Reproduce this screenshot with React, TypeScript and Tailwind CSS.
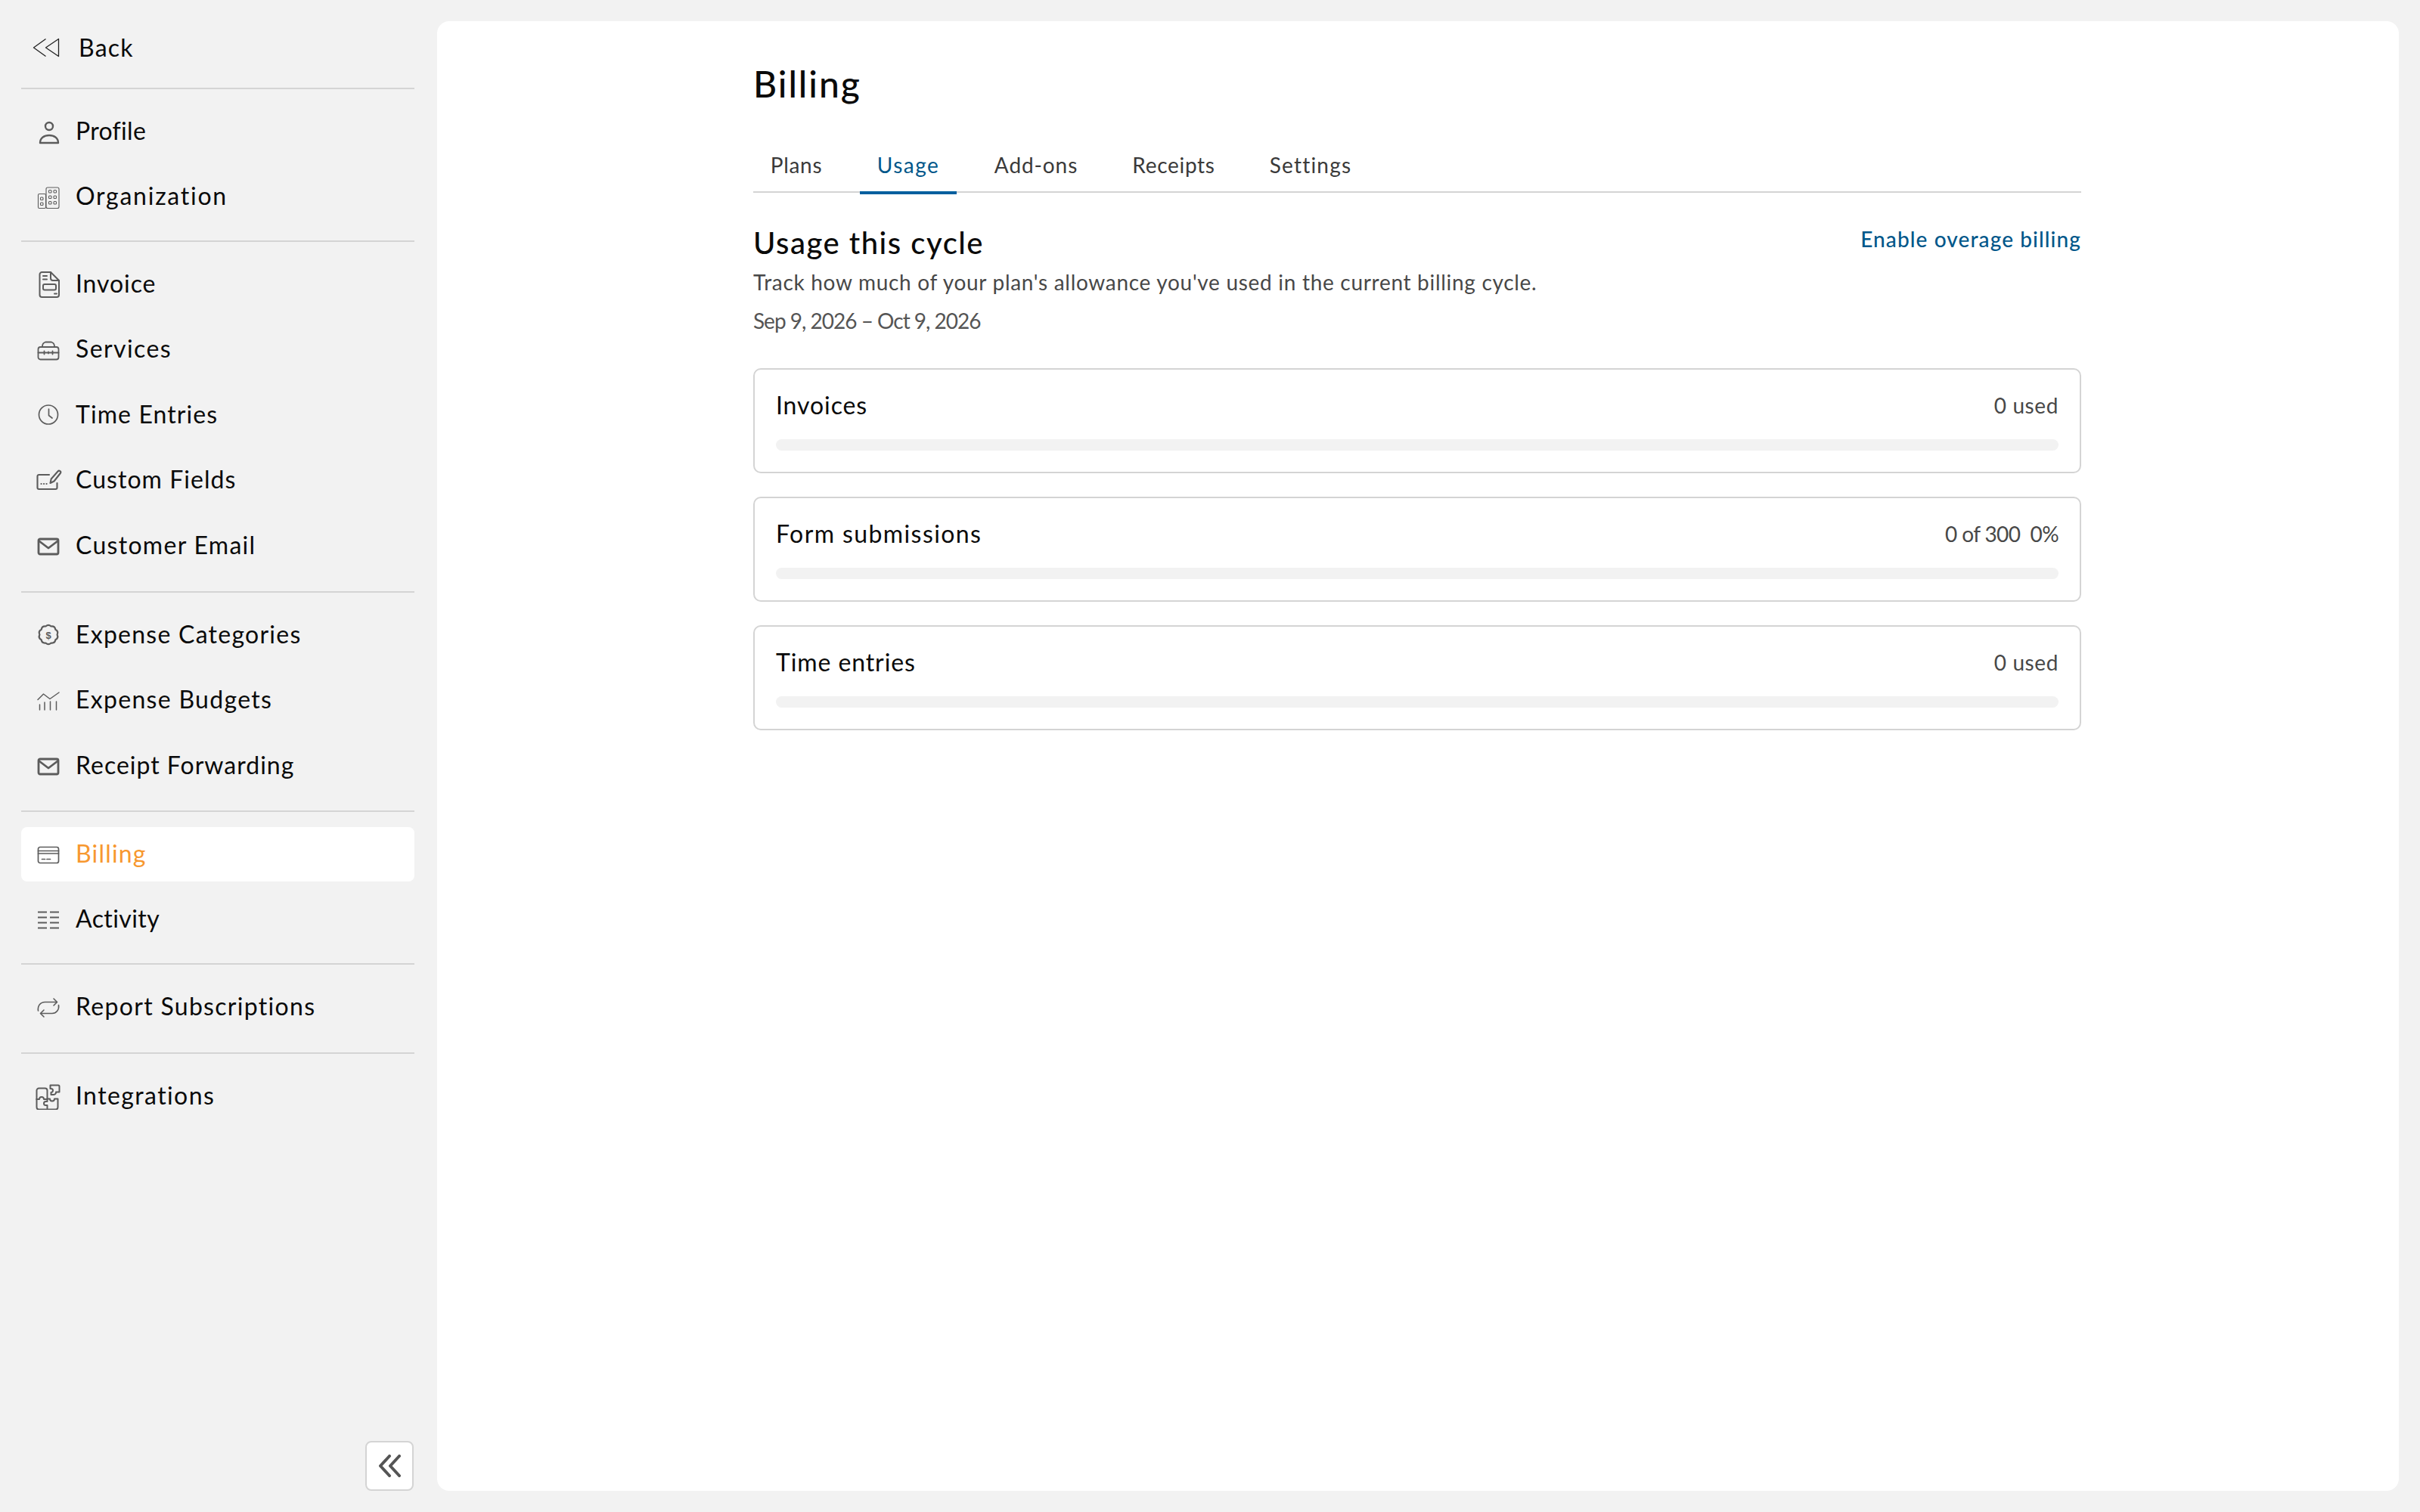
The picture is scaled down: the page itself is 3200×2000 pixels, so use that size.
import React from "react";

const stroke = "#5c5c5c";

function Svg({ children, sw = 2 }: { children: React.ReactNode; sw?: number }) {
  return (
    <svg viewBox="0 0 36 36" className="w-[36px] h-[36px] shrink-0" fill="none" stroke={stroke} strokeWidth={sw} strokeLinecap="round" strokeLinejoin="round">
      {children}
    </svg>
  );
}

const MailIcon = () => (
  <Svg sw={2.8}>
    <rect x="5" y="9" width="26" height="20" rx="2" />
    <path d="M5.500 11.500 18 21l12.500-9.500" />
  </Svg>
);

function scallop() {
  const n = 10;
  const cx = 18, cy = 17.5;
  let d = "";
  for (let i = 0; i < n; i++) {
    const a0 = (i / n) * Math.PI * 2;
    const a1 = ((i + 1) / n) * Math.PI * 2;
    const am = (a0 + a1) / 2;
    const p0 = [cx + 11.6 * Math.cos(a0), cy + 11.6 * Math.sin(a0)];
    const pm = [cx + 14.4 * Math.cos(am), cy + 14.4 * Math.sin(am)];
    const p1 = [cx + 11.6 * Math.cos(a1), cy + 11.6 * Math.sin(a1)];
    if (i === 0) d += `M${p0[0].toFixed(2)} ${p0[1].toFixed(2)}`;
    d += `Q${pm[0].toFixed(2)} ${pm[1].toFixed(2)} ${p1[0].toFixed(2)} ${p1[1].toFixed(2)}`;
  }
  return d + "Z";
}

const icons: Record<string, React.ReactNode> = {
  profile: (
    <Svg sw={2.4}>
      <circle cx="19" cy="11" r="5" />
      <path d="M7 33c0-6.500 5.500-10 12-10s12 3.500 12 10z" />
    </Svg>
  ),
  org: (
    <Svg sw={1.1}>
      <rect x="4.500" y="14.500" width="10" height="19" rx="1.500" />
      <rect x="15" y="6" width="17" height="27.500" rx="2" />
      <rect x="7.500" y="19" width="3.500" height="3.500" rx="1" />
      <rect x="7.500" y="26" width="3.500" height="3.500" rx="1" />
      <rect x="18.500" y="9.500" width="3.500" height="3.500" rx="1" />
      <rect x="25" y="9.500" width="3.500" height="3.500" rx="1" />
      <rect x="18.500" y="17" width="3.500" height="3.500" rx="1" />
      <rect x="25" y="17" width="3.500" height="3.500" rx="1" />
      <rect x="18.500" y="24.500" width="3.500" height="3.500" rx="1" />
      <rect x="25" y="24.500" width="3.500" height="3.500" rx="1" />
    </Svg>
  ),
  invoice: (
    <Svg sw={2}>
      <path d="M9.500 2H21l11 11v19a3 3 0 0 1-3 3H9.500a3 3 0 0 1-3-3V5a3 3 0 0 1 3-3z" />
      <path d="M21 2v8a3 3 0 0 0 3 3h8" />
      <path d="M11 7h5M11 11.500h5M26 30.500h3" />
      <rect x="11" y="18" width="17" height="7.500" rx="2" />
    </Svg>
  ),
  services: (
    <Svg sw={1.8}>
      <rect x="4.500" y="15" width="27" height="16.500" rx="3" />
      <path d="M10 15v-1a6 6 0 0 1 4-5.500h8a6 6 0 0 1 4 5.500v1" />
      <path d="M4.500 22.500h27M12.500 20.500v4M23.500 20.500v4M18 21.500v2" />
    </Svg>
  ),
  time: (
    <Svg sw={1.7}>
      <circle cx="18" cy="17.500" r="12.500" />
      <path d="M18.500 10v8.500l4.500 3.500" />
    </Svg>
  ),
  custom: (
    <Svg sw={2.1}>
      <path d="M19 11H5.500a2 2 0 0 0-2 2v15a2 2 0 0 0 2 2h22a2 2 0 0 0 2-2v-6" />
      <path d="M20.500 22l1.200-5.500L30.500 6.500a2 2 0 0 1 3.300 2.500L25.500 19.500z" />
      <path d="M8.500 23h.1M12 23h.1M15.500 23h.1" strokeWidth={2.2} />
    </Svg>
  ),
  mail: <MailIcon />,
  cat: (
    <Svg sw={2.2}>
      <path d={scallop()} />
      <text x="18" y="22.500" textAnchor="middle" fontSize="13" fontWeight="700" fill={stroke} stroke="none" fontFamily="'Liberation Sans',sans-serif">$</text>
    </Svg>
  ),
  budget: (
    <Svg sw={1.5}>
      <path d="M4 17.500 11.500 10l8.500 6.500L32 8" />
      <path d="M6.500 31v-7M13 31V21M20.500 31V20M28.500 31V20" />
    </Svg>
  ),
  billing: (
    <Svg sw={1.7}>
      <rect x="4.500" y="8.500" width="27" height="21" rx="2.500" />
      <path d="M4.500 13.500h27M4.500 17h27M9.500 24.500h4M16 24.500h4.500" />
    </Svg>
  ),
  activity: (
    <Svg sw={2}>
      <path d="M4 8.500h12M4 15.500h12M4 22.500h12M4 29.500h12M20 8.500h12M20 15.500h12M20 22.500h12M20 29.500h12" strokeLinecap="butt" />
    </Svg>
  ),
  report: (
    <Svg sw={1.6}>
      <path d="M4.500 23c-1-6.500 3-11.500 9-11.500h15.500" />
      <path d="M25 7l4.500 4.500L25 16" />
      <path d="M31.500 15.500c1 6-3 11-8.500 11H8" />
      <path d="M12 22l-4.500 4.500L12 31" />
    </Svg>
  ),
  integrations: (
    <Svg sw={2}>
      <path d="M2.500 22V10.500a3 3 0 0 1 3-3h8a3 3 0 0 1 3 3v11" />
      <path d="M2.500 22H6a3 3 0 1 1 6 0h4.500" />
      <path d="M2.500 22v10.500a3 3 0 0 0 3 3h22a3 3 0 0 0 3-3V21.500H26a3 3 0 0 1-6 0h-3.500" />
      <path d="M16.500 21.500v3.500h-2a2.500 2.500 0 1 0 0 5h2v5.500" />
      <path d="M20.500 3.500H31a1.500 1.500 0 0 1 1.500 1.500v7.500H28a3 3 0 0 1-3 3.500h-3.500v-3a2.500 2.500 0 0 0 0-5h-1z" />
    </Svg>
  ),
};

type Item = { label: string; icon: string; active?: boolean; track: string };
type Section = { mt: string; items: Item[] };

const sections: Section[] = [
  {
    mt: "mt-[17px]",
    items: [
      { label: "Profile", icon: "profile", track: "tracking-[0.3px]" },
      { label: "Organization", icon: "org", track: "tracking-[1.75px]" },
    ],
  },
  {
    mt: "mt-[21.6px]",
    items: [
      { label: "Invoice", icon: "invoice", track: "tracking-[0.9px]" },
      { label: "Services", icon: "services", track: "tracking-[1.4px]" },
      { label: "Time Entries", icon: "time", track: "tracking-[1.1px]" },
      { label: "Custom Fields", icon: "custom", track: "tracking-[1.05px]" },
      { label: "Customer Email", icon: "mail", track: "tracking-[1.3px]" },
    ],
  },
  {
    mt: "mt-[24.4px]",
    items: [
      { label: "Expense Categories", icon: "cat", track: "tracking-[1.25px]" },
      { label: "Expense Budgets", icon: "budget", track: "tracking-[1.3px]" },
      { label: "Receipt Forwarding", icon: "mail", track: "tracking-[1px]" },
    ],
  },
  {
    mt: "mt-[23.2px]",
    items: [
      { label: "Billing", icon: "billing", active: true, track: "tracking-[1.2px]" },
      { label: "Activity", icon: "activity", track: "tracking-[0.4px]" },
    ],
  },
  { mt: "mt-[21.6px]", items: [{ label: "Report Subscriptions", icon: "report", track: "tracking-[1.3px]" }] },
  { mt: "mt-[24px]", items: [{ label: "Integrations", icon: "integrations", track: "tracking-[1.4px]" }] },
];

function Row({ item }: { item: Item }) {
  return (
    <div className={`h-[72px] flex items-center pl-[18px] gap-[18px] rounded-[8px] ${item.active ? "bg-white" : ""}`}>
      {icons[item.icon]}
      <span className={`text-[32px] leading-none pb-[2px] ${item.track} ${item.active ? "text-[#f7982f]" : "text-[#0a0a0a]"}`}>{item.label}</span>
    </div>
  );
}

function Sidebar() {
  return (
    <aside className="w-[578px] shrink-0 h-full flex flex-col pl-[28px] pr-[30px] pt-[27px] pb-[28px]">
      <div className="h-[72px] flex items-center gap-[25px] pl-[15px]">
        <svg viewBox="0 0 36 26" className="w-[36px] h-[26px] shrink-0" fill="none" stroke="#222222" strokeWidth="1.300" strokeLinejoin="round">
          <path d="M17.500 1.500 1.500 13l16 11.500" />
          <path d="M34.500 1.500 17.500 13l17 11.500z" />
        </svg>
        <span className="text-[32px] leading-none tracking-[1.2px] pb-[1px] text-[#0a0a0a]">Back</span>
      </div>
      {sections.map((s, i) => (
        <div key={i}>
          <div className={`h-[2px] bg-[#d4d4d4] ${s.mt} mb-[20px]`} />
          <div className="flex flex-col gap-[14.4px]">
            {s.items.map((it) => (
              <Row key={it.label} item={it} />
            ))}
          </div>
        </div>
      ))}
      <button className="mt-auto self-end mr-[1px] w-[64px] h-[66px] bg-white border-2 border-[#d4d4d4] rounded-[8px] flex items-center justify-center">
        <svg viewBox="0 0 30 30" className="w-[30px] h-[30px]" fill="none" stroke="#555555" strokeWidth="4" strokeLinecap="round" strokeLinejoin="round">
          <path d="M15 2 3 15l12 13" />
          <path d="M28 2 16 15l12 13" />
        </svg>
      </button>
    </aside>
  );
}

const tabs = [
  { label: "Plans", w: "w-[114px]", track: "tracking-[0.7px]" },
  { label: "Usage", w: "w-[128px]", track: "tracking-[1.5px]", active: true },
  { label: "Add-ons", w: "w-[156px]", track: "tracking-[0.9px]" },
  { label: "Receipts", w: "w-[154px]", track: "tracking-[0.7px]" },
  { label: "Settings", w: "w-[154px]", track: "tracking-[1.2px]" },
];

function UsageCard({ label, value, lt, vt }: { label: string; value: string; lt: string; vt: string }) {
  return (
    <div className="h-[139px] border-2 border-[#d4d4d4] rounded-[10px] px-[28px] pt-[28px] flex flex-col">
      <div className="flex items-center justify-between h-[38px]">
        <span className={`text-[32px] leading-none text-[#0a0a0a] ${lt}`}>{label}</span>
        <span className={`text-[28px] leading-none text-[#484848] whitespace-pre ${vt}`}>{value}</span>
      </div>
      <div className="mt-[26px] h-[15px] rounded-full bg-[#f2f2f2]" />
    </div>
  );
}

export default function App() {
  return (
    <div className="w-[3200px] h-[2000px] flex bg-[#f2f2f2] font-['Lato',sans-serif] overflow-hidden">
      <Sidebar />
      <main className="flex-1 mt-[28px] mb-[28px] mr-[28px] bg-white rounded-[16px] pl-[418px] pr-[420px]">
        <h1 className="text-[48px] leading-none font-medium tracking-[2px] text-[#0a0a0a] pt-[59px] h-[115px]">Billing</h1>
        <nav className="mt-[53px] h-[59px] flex gap-[27px] border-b-2 border-[#d4d4d4]">
          {tabs.map((t) => (
            <div key={t.label} className={`${t.w} h-[61px] flex items-center justify-center text-[28px] leading-none ${t.track} ${t.active ? "pb-[14px] border-b-4 border-[#005f9e] text-[#00578a]" : "pb-[18px] text-[#3a3a3a]"}`}>
              {t.label}
            </div>
          ))}
        </nav>
        <div className="flex justify-between items-start mt-[43px]">
          <div>
            <h2 className="text-[40px] leading-[46px] font-medium tracking-[1.5px] text-[#0a0a0a]">Usage this cycle</h2>
            <p className="mt-[12px] text-[28px] leading-[34px] tracking-[0.7px] text-[#484848]">Track how much of your plan's allowance you've used in the current billing cycle.</p>
            <p className="mt-[17px] text-[28px] leading-[34px] tracking-[-1px] text-[#555555]">Sep 9, 2026 – Oct 9, 2026</p>
          </div>
          <a className="mt-[1px] text-[28px] leading-[34px] font-medium tracking-[1.1px] text-[#00578a]">Enable overage billing</a>
        </div>
        <div className="mt-[46px] flex flex-col gap-[31px]">
          <UsageCard label="Invoices" value="0 used" lt="tracking-[0.9px]" vt="tracking-[0.6px]" />
          <UsageCard label="Form submissions" value={"0 of 300  0%"} lt="tracking-[1.4px]" vt="tracking-[-0.6px]" />
          <UsageCard label="Time entries" value="0 used" lt="tracking-[0.9px]" vt="tracking-[0.6px]" />
        </div>
      </main>
    </div>
  );
}
